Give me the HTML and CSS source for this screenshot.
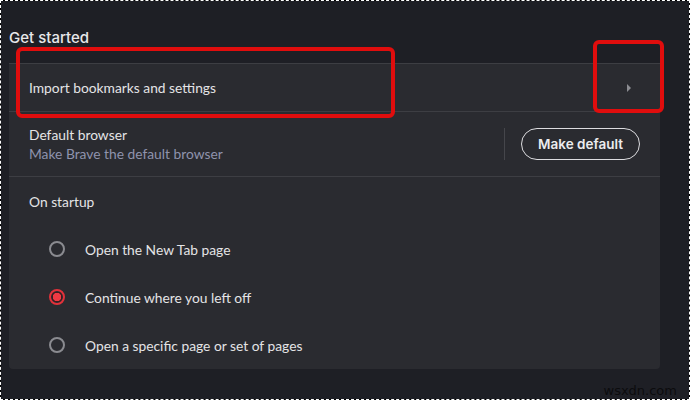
FILE: index.html
```html
<!DOCTYPE html>
<html lang="en">
<head>
<meta charset="utf-8">
<title>Settings – Get started</title>
<link rel="stylesheet" href="styles.css">
</head>
<body>
<div class="frame">
  <h2 class="section-title">Get started</h2>
  <div class="card">
    <div class="row row-link">
      <span class="label">Import bookmarks and settings</span>
      <svg class="arrow" width="6" height="8" viewBox="0 0 6 8"><path d="M1 0 L5 4 L1 8 Z" fill="#8c8d92"/></svg>
    </div>
    <div class="row row-default">
      <div class="text-stack">
        <span class="label">Default browser</span>
        <span class="sub">Make Brave the default browser</span>
      </div>
      <div class="actions">
        <span class="divider"></span>
        <button class="pill">Make default</button>
      </div>
    </div>
    <div class="row row-head">
      <span class="label">On startup</span>
    </div>
    <div class="radio-row">
      <span class="radio"></span>
      <span class="label">Open the New Tab page</span>
    </div>
    <div class="radio-row">
      <span class="radio checked"></span>
      <span class="label">Continue where you left off</span>
    </div>
    <div class="radio-row">
      <span class="radio"></span>
      <span class="label">Open a specific page or set of pages</span>
    </div>
  </div>

  <span class="mark mark-import"></span>
  <span class="mark mark-arrow"></span>
  <span class="watermark">wsxdn.com</span>
</div>
</body>
</html>
```
FILE: styles.css
```css
* { box-sizing: border-box; }

html, body {
  margin: 0;
  padding: 0;
}

body {
  width: 690px;
  height: 400px;
  overflow: hidden;
  font-family: "Lato", "Noto Sans", sans-serif;
  color: #e4e4e6;
}

.frame {
  position: relative;
  width: 690px;
  height: 400px;
  border: 1px dashed #ffffff;
  background: linear-gradient(#1e1f25, #1e1f25) padding-box, #000 border-box;
  padding: 0 29px 0 8px;
}

.section-title {
  margin: 0;
  padding: 26px 0 0 0;
  height: 62px;
  font-family: "Inter", "Open Sans", sans-serif;
  font-weight: 500;
  font-size: 15px;
  line-height: 22px;
  color: #e8e8ea;
}

.card {
  background: #2a2b30;
  border-radius: 0 0 4px 4px;
  display: flex;
  flex-direction: column;
}

.row {
  display: flex;
  align-items: center;
  padding: 0 20px;
  border-top: 1px solid #3d3e43;
}

.label {
  font-size: 13.8px;
  color: #e4e4e6;
}

.row-link {
  height: 48px;
  justify-content: space-between;
  padding-right: 28px;
}

.arrow { display: block; }

.row-default {
  height: 65px;
  justify-content: space-between;
}

.text-stack {
  display: flex;
  flex-direction: column;
  gap: 2px;
  padding-bottom: 1px;
}

.sub {
  font-size: 13.8px;
  color: #8f93ad;
}

.actions {
  display: flex;
  align-items: center;
  gap: 16px;
}

.divider {
  width: 1px;
  height: 32px;
  background: #45464b;
}

.pill {
  height: 32px;
  width: 119px;
  border: 1px solid #dcdcdf;
  border-radius: 16px;
  background: transparent;
  color: #ececee;
  font-family: "Inter", "Open Sans", sans-serif;
  font-weight: 600;
  font-size: 13.5px;
  padding: 0;
  cursor: pointer;
}

.row-head {
  height: 49px;
}

.radio-row {
  height: 48px;
  display: flex;
  align-items: center;
  gap: 20px;
  padding-left: 40px;
}

.radio {
  width: 16px;
  height: 16px;
  border-radius: 50%;
  border: 2px solid #8a8b90;
  flex: none;
}

.radio.checked {
  border-color: #e2313a;
  background: radial-gradient(circle, #ef3a43 0 4px, #3a1d20 4.5px 5px, transparent 5.5px);
}

/* annotation highlights */
.mark {
  position: absolute;
  border: 4px solid #e00d0d;
  border-radius: 6px;
}

.mark-import {
  left: 15px;
  top: 46px;
  width: 379px;
  height: 71px;
}

.mark-arrow {
  left: 592px;
  top: 39px;
  width: 71px;
  height: 73px;
}

.watermark {
  position: absolute;
  right: 12px;
  bottom: 1px;
  font-family: "DejaVu Sans", sans-serif;
  font-size: 13px;
  color: #0c0c0e;
}
```
